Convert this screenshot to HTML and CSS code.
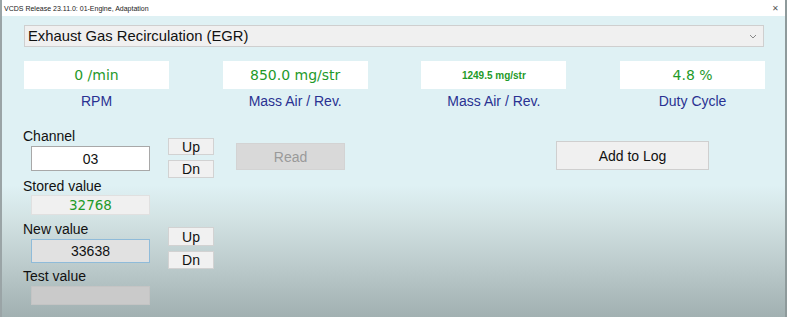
FILE: index.html
```html
<!DOCTYPE html>
<html>
<head>
<meta charset="utf-8">
<link rel="stylesheet" href="styles.css">
</head>
<body>
<div class="window">
  <div class="titlebar">
    <span class="title">VCDS Release 23.11.0: 01-Engine,  Adaptation</span>
    <span class="close">&#x2715;</span>
  </div>
  <div class="content">
    <div class="select">
      <span>Exhaust Gas Recirculation (EGR)</span>
      <svg class="chev" width="8" height="5" viewBox="0 0 8 5"><path d="M1 1 L4 4 L7 1" fill="none" stroke="#888" stroke-width="1"/></svg>
    </div>
    <div class="gauges">
      <div class="gauge"><div class="gbox">0 /min</div><div class="glabel">RPM</div></div>
      <div class="gauge"><div class="gbox">850.0 mg/str</div><div class="glabel">Mass Air / Rev.</div></div>
      <div class="gauge"><div class="gbox small">1249.5 mg/str</div><div class="glabel">Mass Air / Rev.</div></div>
      <div class="gauge"><div class="gbox">4.8 %</div><div class="glabel">Duty Cycle</div></div>
    </div>
    <div class="lower">
      <div class="fields">
        <div class="flabel">Channel</div>
        <div class="field channel">03</div>
        <div class="flabel">Stored value</div>
        <div class="field stored">32768</div>
        <div class="flabel">New value</div>
        <div class="field newval">33638</div>
        <div class="flabel">Test value</div>
        <div class="field test"></div>
      </div>
      <div class="updn">
        <div class="group g1"><div class="btn up">Up</div><div class="btn dn">Dn</div></div>
        <div class="group g2"><div class="btn up">Up</div><div class="btn dn">Dn</div></div>
      </div>
      <div class="btn read">Read</div>
      <div class="btn addlog">Add to Log</div>
    </div>
  </div>
</div>
</body>
</html>
```
FILE: styles.css
```css
html, body { margin: 0; padding: 0; }
body { width: 787px; height: 317px; overflow: hidden; font-family: "Liberation Sans", Arial, sans-serif; }
.window {
  width: 787px; height: 317px; box-sizing: border-box;
  border-left: 2px solid #9aa4a6; border-right: 2px solid #8e9a9b;
  background: linear-gradient(to bottom, #dff1f4 0px, #dff1f4 185px, #d2e2e3 220px, #bccbcc 265px, #a1b0b1 317px);
  display: flex; flex-direction: column;
}
.titlebar {
  height: 16px; background: #ffffff; display: flex; align-items: center; justify-content: space-between;
  padding: 0 4px 0 2px; flex: none;
}
.title { font-family: "Liberation Sans", Arial, sans-serif; font-size: 7px; color: #222; }
.close { font-size: 8px; color: #555; margin-right: 2px; }
.content { padding: 9px 0 0 22px; }
.select {
  width: 740px; height: 22px; box-sizing: border-box; background: #f0f0f0; border: 1px solid #cfcfcf;
  display: flex; align-items: center; justify-content: space-between; padding: 0 6px 0 3px;
  font-size: 14.8px; color: #111;
}
.gauges { display: grid; grid-template-columns: repeat(4, 145px); column-gap: 53.7px; margin-top: 14px; }
.gbox {
  height: 28px; background: #fff; display: flex; align-items: center; justify-content: center;
  font-family: "DejaVu Sans", Verdana, sans-serif; font-size: 14px; color: #1f9a2a;
}
.gbox.small { font-family: "Liberation Sans", Arial, sans-serif; font-size: 10px; font-weight: bold; }
.glabel { text-align: center; margin-top: 4px; font-size: 14px; line-height: 16px; color: #2a3192; }
.lower { display: flex; margin-top: 19px; }
.fields { display: flex; flex-direction: column; width: 130px; }
.flabel { font-size: 14px; line-height: 16px; height: 16px; color: #111; margin-left: -1px; }
.field {
  margin-left: 7px; width: 119px; box-sizing: border-box; display: flex; align-items: center; justify-content: center;
  font-size: 14px; color: #111;
}
.channel { height: 25px; margin-top: 2px; background: #fff; border: 1px solid #a8a8a8; margin-bottom: 7px; }
.stored { height: 20px; margin-top: 1px; background: #f0f0f0; border: 1px solid #e0e0e0; color: #1f9a2a; font-family: "DejaVu Sans", Verdana, sans-serif; font-size: 13.5px; margin-bottom: 6px; }
.newval { height: 24px; margin-top: 2px; background: #e1e1e1; border: 1px solid #8fbbd9; margin-bottom: 5px; }
.test { height: 19px; margin-top: 2px; background: #cacaca; border: 1px solid #c4c4c4; }
.updn { display: flex; flex-direction: column; margin-left: 14px; padding-top: 10px; }
.group { display: flex; flex-direction: column; gap: 5px; }
.g2 { margin-top: 49px; }
.btn {
  box-sizing: border-box; background: #f1f1f1; border: 1px solid #d2d2d2; display: flex; align-items: center; justify-content: center;
  font-size: 14px; color: #111;
}
.updn .btn { width: 46px; }
.g1 .up { height: 17px; }
.g1 .dn { height: 18px; }
.g2 .up { height: 19px; }
.g2 .dn { height: 18px; }
.read { width: 109px; height: 27px; margin-left: 22px; margin-top: 15px; background: #d9d9d9; border-color: #d3d3d3; color: #9a9a9a; }
.addlog { width: 153px; height: 29px; margin-left: 211px; margin-top: 13px; background: #f0f0f0; border-color: #cfcfcf; }
```
